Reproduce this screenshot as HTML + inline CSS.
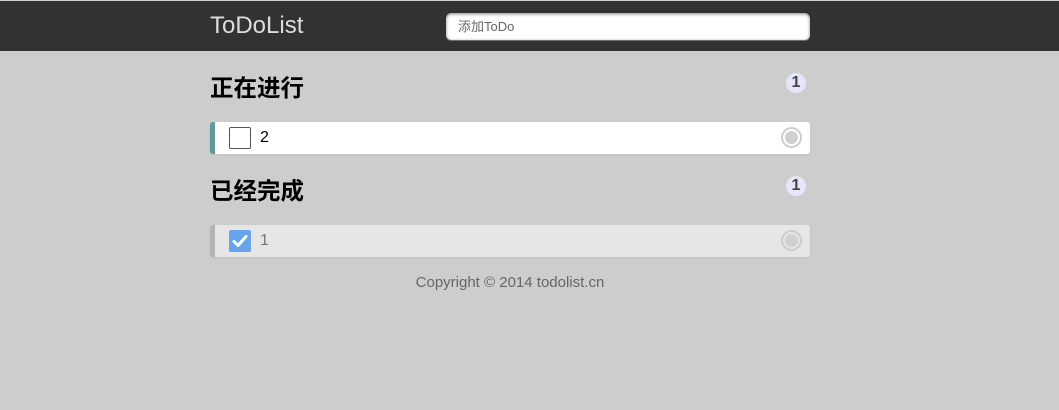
<!DOCTYPE html>
<html><head><meta charset="utf-8"><style>
*{margin:0;padding:0;box-sizing:border-box}
body{width:1059px;height:410px;background:#cdcdcd;font-family:"Liberation Sans","Noto Sans CJK SC",sans-serif;position:relative;overflow:hidden}
.hd{position:absolute;top:1px;left:0;width:1059px;height:50px;background:#323232}
.logo{position:absolute;left:210px;top:12px;font-size:24px;color:#ddd;line-height:26px}
.inp{position:absolute;left:446px;top:12px;width:364px;height:27px;background:#fff;border-radius:5px;box-shadow:inset 0 1px 3px rgba(0,0,0,.5),0 1px 0 rgba(255,255,255,.3);font-size:13px;color:#666;padding-left:12px;line-height:27px}
h2{position:absolute;left:210px;font-size:23.5px;line-height:26px;font-weight:bold;color:#000;font-family:"Liberation Sans","Noto Sans CJK SC",sans-serif}
.cnt{position:absolute;left:786px;width:20px;height:20px;border-radius:10px;background:#e6e6fa;color:#444;font-size:16px;font-weight:bold;text-align:center;line-height:20px}
.item{position:absolute;left:210px;width:600px;height:32px;border-radius:3px;border-left:5px solid #629a9c;background:#fff;box-shadow:0 1px 2px rgba(0,0,0,.07)}
.item.done{background:#e6e6e6;border-left-color:#b3b3b3}
.cb{position:absolute;left:14px;top:5px;width:22px;height:22px;border:1px solid #555;border-radius:2px;background:#fff}
.done .cb{border:none;background:#65a3eb}
.t{position:absolute;left:45px;top:7px;font-size:16px;line-height:18px;color:#000}
.done .t{color:#777}
.rm{position:absolute;right:8px;top:5px;width:21px;height:21px;border-radius:50%;border:2px solid #ccc;background:#fff}
.rm:after{content:"";position:absolute;left:2px;top:2px;width:13px;height:13px;border-radius:50%;background:#d0d0d0}
.done .rm{background:#e6e6e6}
.ft{position:absolute;top:274px;left:0;width:1020px;text-align:center;font-size:15px;color:#666}
</style></head><body>
<div class="hd"><div class="logo">ToDoList</div><div class="inp">添加ToDo</div></div>
<h2 style="top:75px">正在进行</h2><div class="cnt" style="top:73px">1</div>
<div class="item" style="top:122px"><div class="cb"></div><div class="t">2</div><div class="rm"></div></div>
<h2 style="top:178px">已经完成</h2><div class="cnt" style="top:176px">1</div>
<div class="item done" style="top:225px"><div class="cb"><svg width="22" height="22" viewBox="0 0 22 22"><path d="M5 11.5l4 4 8-9" stroke="#fff" stroke-width="3" fill="none" stroke-linecap="round" stroke-linejoin="round"/></svg></div><div class="t">1</div><div class="rm"></div></div>
<div class="ft">Copyright © 2014 todolist.cn</div>
</body></html>
